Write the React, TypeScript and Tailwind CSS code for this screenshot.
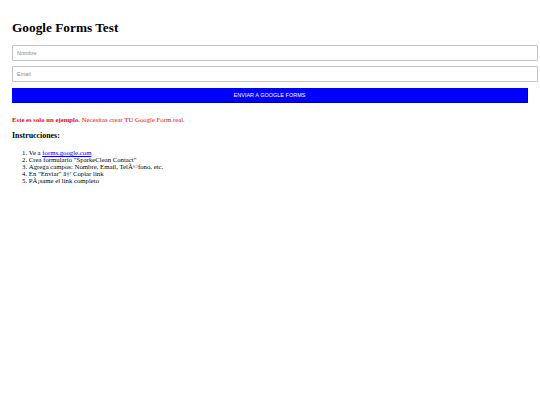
import React from "react";

export default function App() {
  return (
    <div className="bg-white min-h-[405px] w-[540px] overflow-hidden px-[12px] pt-[11.5px] font-['Liberation_Serif',serif] text-[6.75px] leading-[normal] text-black">
      <h1 className="text-[13.3px] font-bold leading-[normal] mt-[8.8px] mb-[8.6px]">Google Forms Test</h1>
      <input
        placeholder="Nombre"
        className="block w-[526px] h-[16px] border border-[#c4c4c4] rounded-[1px] mb-[5.5px] px-[4px] font-['Liberation_Sans',sans-serif] text-[5.5px] placeholder:text-[#8a8a8a] outline-none"
      />
      <input
        placeholder="Email"
        className="block w-[526px] h-[16px] border border-[#c4c4c4] rounded-[1px] mb-[5.5px] px-[4px] font-['Liberation_Sans',sans-serif] text-[5.5px] placeholder:text-[#8a8a8a] outline-none"
      />
      <button className="block w-[516px] h-[15.5px] bg-[#0000ff] border-b border-r border-[#000080] text-white font-['Liberation_Sans',sans-serif] text-[5.5px] text-center">
        ENVIAR A GOOGLE FORMS
      </button>
      <p className="mt-[12.3px] mb-[6.75px] text-[#ff0000]">
        <b>Este es solo un ejemplo.</b> Necesitas crear TU Google Form real.
      </p>
      <h3 className="text-[7.9px] font-bold mt-[7.9px] mb-[7.9px] leading-[normal]">Instrucciones:</h3>
      <ol className="list-decimal pl-[16.8px] mt-[9.5px]">
        <li>
          Ve a <a href="#" className="text-[#0000ee] underline">forms.google.com</a>
        </li>
        <li>Crea formulario "SparkeClean Contact"</li>
        <li>Agrega campos: Nombre, Email, TelÃ©fono, etc.</li>
        <li>En "Enviar" â†’ Copiar link</li>
        <li>PÃ¡same el link completo</li>
      </ol>
    </div>
  );
}
